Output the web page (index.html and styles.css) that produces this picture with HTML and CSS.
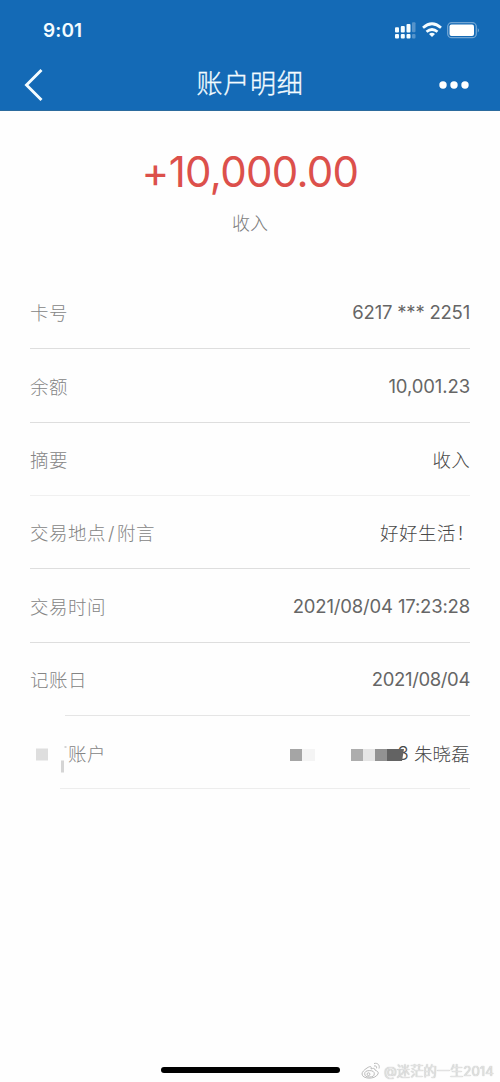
FILE: index.html
```html
<!DOCTYPE html>
<html lang="zh-CN">
<head>
<meta charset="utf-8">
<title>账户明细</title>
<link rel="stylesheet" href="styles.css">
</head>
<body>
<div class="screen">
  <header class="header">
    <div class="status">
      <span class="clock">9:01</span>
      <svg class="indicators" width="86" height="20" viewBox="1 0 86 20">
        <g fill="#f4fcff">
          <rect x="1" y="7.3" width="4" height="5.2" rx="1"/><rect x="6.8" y="6" width="4" height="6.5" rx="1"/><rect x="12.5" y="4" width="4" height="8.5" rx="1"/>
          <rect x="1" y="14" width="4" height="4.4" rx="1"/><rect x="6.8" y="14" width="4" height="4.4" rx="1"/><rect x="12.5" y="14" width="4" height="4.4" rx="1"/>
        </g>
        <g fill="#fff" opacity=".28"><rect x="18" y="2.3" width="3.5" height="10" rx="1"/><rect x="18" y="14" width="3.5" height="4.4" rx="1"/></g>
        <g fill="none" stroke="#f4fcff" stroke-width="2.7">
          <path d="M29 7.7Q38 -.2 47 7.7"/><path d="M32.5 11.8Q38 7.2 43.5 11.8"/>
        </g>
        <path d="M35 14Q38 11.7 41 14L38 17Z" fill="#f4fcff"/>
        <rect x="53.7" y="2.7" width="28.6" height="15" rx="4" fill="none" stroke="#fff" stroke-opacity=".4" stroke-width="1.3"/>
        <rect x="55.5" y="4.5" width="24.5" height="11.4" rx="2" fill="#fff"/>
        <path d="M83.8 8v4.500q2-2.200 0-4.500" fill="#fff" opacity=".5"/>
      </svg>
    </div>
    <nav class="nav">
      <svg class="back" width="20" height="34" viewBox="0 0 20 34"><path d="M17.500 2 2.500 17 17.500 32" fill="none" stroke="#f4fcff" stroke-width="2.900"/></svg>
      <h1 class="title">账户明细</h1>
      <svg class="more" width="30" height="8" viewBox="0 0 30 8" fill="#fff"><circle cx="4" cy="4" r="3.700"/><circle cx="15" cy="4" r="3.700"/><circle cx="26" cy="4" r="3.700"/></svg>
    </nav>
  </header>
  <main>
    <section class="summary">
      <div class="amount">+10,000.00</div>
      <div class="kind">收入</div>
    </section>
    <dl class="details">
      <div class="row"><dt>卡号</dt><dd class="card">6217 *** 2251</dd></div>
      <div class="row"><dt>余额</dt><dd class="balance">10,001.23</dd></div>
      <div class="row faint"><dt>摘要</dt><dd class="han">收入</dd></div>
      <div class="row"><dt>交易地点<span class="slash">/</span>附言</dt><dd class="han message">好好生活！</dd></div>
      <div class="row"><dt>交易时间</dt><dd class="date time">2021/08/04 17:23:28</dd></div>
      <div class="row cut"><dt>记账日</dt><dd class="date">2021/08/04</dd></div>
      <div class="row cut last">
        <dt class="masked-label"><svg class="label-mask" width="38" height="40" viewBox="0 0 38 40"><path d="M6 15.500h12v12H6z" fill="#dedede"/><path d="M31 27.500h3v12h-3z" fill="#d5d5d5"/><path d="M34.500 14h2" stroke="#aaa"/></svg><span>账户</span></dt>
        <dd class="masked-value han"><span class="digit">3</span><span class="owner">朱晓磊</span>
          <svg class="value-mask" width="115" height="12" viewBox="0 0 115 12"><path d="M0 0h12v12H0z" fill="#a5a5a5"/><path d="M12 0h13v12H12z" fill="#f4f4f4"/><path d="M61 0h12v12H61z" fill="#adadad"/><path d="M73 0h12v12H73z" fill="#e5e5e5"/><path d="M85 0h12v12H85z" fill="#929292"/><path d="M97 0h17l-2 12H97z" fill="#636363"/></svg>
        </dd>
      </div>
    </dl>
  </main>
  <footer class="footer">
    <span class="home"></span>
    <div class="watermark">
      <svg width="20" height="18" viewBox="0 0 20 18" fill="none" stroke="#bbb" stroke-width="1"><path d="M14 8c0-2-2-2-4-1 1-3-1-3-4-1C3 8 1 10 1 12c0 5 13 6 16 0 1-2-1-3-3-4Z"/><ellipse cx="8.500" cy="11.800" rx="4.800" ry="3.200"/><circle cx="7.500" cy="12.200" r="1.400"/><path d="M13 1.500c4-1 6 2 5 5M13 4c2-.5 3 .5 2.500 2.300"/></svg>
      <span>@迷茫的一生2014</span>
    </div>
  </footer>
</div>
</body>
</html>
```
FILE: styles.css
```css
* { box-sizing: border-box; }
body { margin: 0; background: #fefefe; font-family: Inter, "Noto Sans CJK SC", sans-serif; color: #666; }
.screen { height: 1082px; display: flex; flex-direction: column; overflow: hidden; }
main { flex: 1; }
.header { height: 111px; background: #146ab6; color: #f4fcff; border-bottom: 1px solid #2b6b9e; }
.status { height: 58px; padding: 2px 19px 0 43px; display: flex; align-items: center; justify-content: space-between; }
.clock { font-size: 19px; font-weight: 600; letter-spacing: .1px; }
.indicators { display: block; }
.nav { height: 54px; padding: 0 31px 0 24px; display: grid; grid-template-columns: 60px 1fr 53px; align-items: center; }
.more { justify-self: end; }
.title { margin: 0; text-align: center; font-size: 26px; line-height: 40px; font-weight: 300; letter-spacing: .7px; padding-bottom: 2px; -webkit-text-stroke: .3px #f4fcff; }
.summary { height: 165.200px; padding-top: 36px; text-align: center; }
.amount { height: 50px; line-height: 50px; font-size: 42px; letter-spacing: -.7px; color: #dc504b; }
.kind { margin-top: 14px; font-size: 18px; line-height: 26px; font-weight: 300; color: #7c7c7c; }
.details { margin: 0; padding: 0 30px; font-size: 18.500px; }
.row { position: relative; height: 73.300px; display: flex; align-items: center; justify-content: space-between; border-bottom: 1px solid #dedede; }
.row.faint { border-color: #f0f0f0; }
.row.cut { border-bottom: 0; }
.row.cut::after { content: ""; position: absolute; left: 35px; right: 0; bottom: 0; height: 1px; background: #e5e5e5; }
.row.last::after { left: 30px; background: #ededed; }
dt { color: #858585; font-weight: 300; letter-spacing: .5px; }
.slash { margin: 0 2px; }
dd { margin: 0; letter-spacing: -.15px; }
.balance { letter-spacing: -.1px; }
.date { letter-spacing: -.37px; }
.time { letter-spacing: -.17px; }
.card { letter-spacing: -.2px; }
.han { font-weight: 300; color: #484848; letter-spacing: .2px; }
.message { letter-spacing: .5px; margin-right: -5px; }
.masked-label, .masked-value { display: flex; align-items: center; }
.label-mask { display: block; }
.masked-value { position: relative; }
.digit { margin-right: 5px; }
.value-mask { position: absolute; right: 65px; top: 9px; }
.footer { position: relative; height: 24px; }
.home { display: block; width: 179px; height: 6px; margin: 9px 0 0 161px; border-radius: 3px; background: #000; }
.watermark { position: absolute; left: 361px; top: 3px; display: flex; gap: 3px; align-items: center; font-size: 13.300px; line-height: 20px; color: #e2e2e2; text-shadow: 0 0 1px #aaa; white-space: nowrap; }
```
